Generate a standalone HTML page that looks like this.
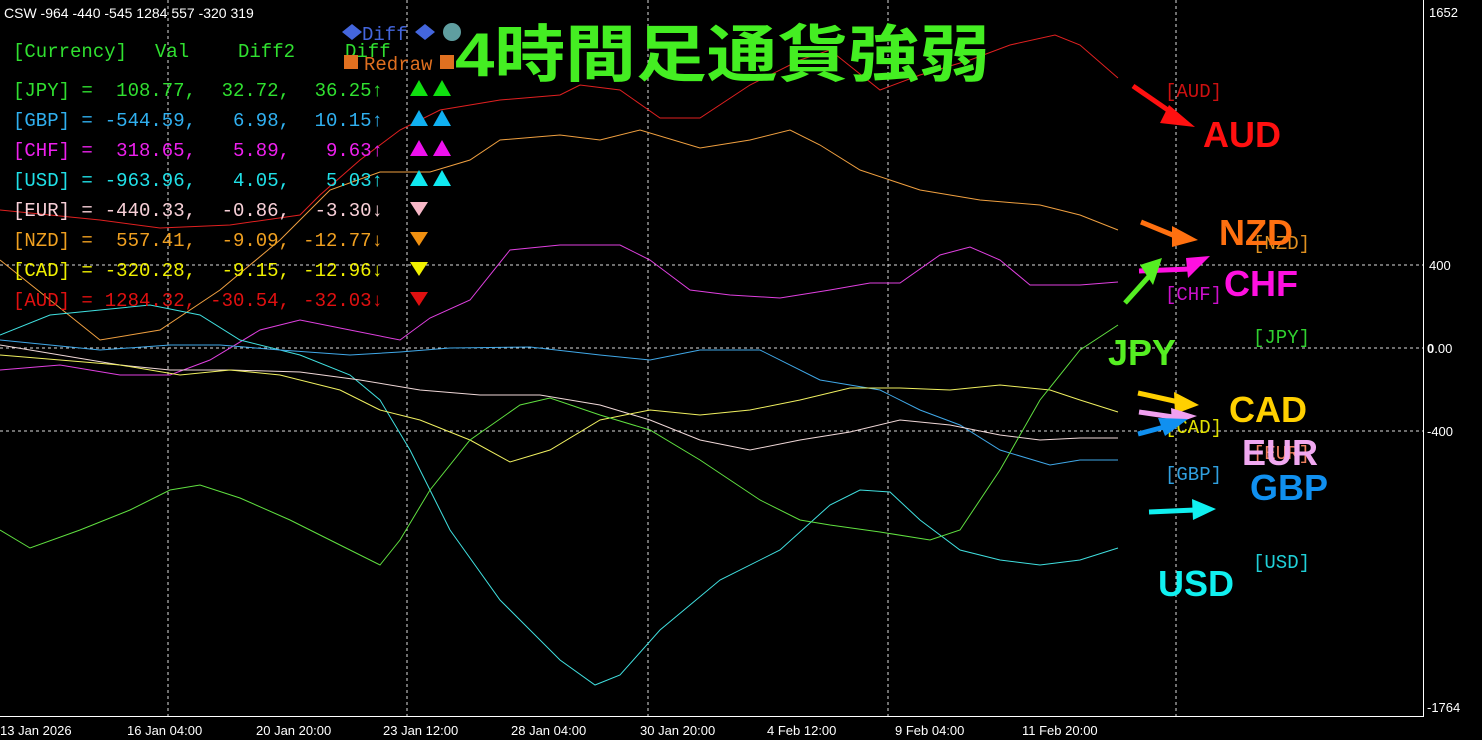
<!DOCTYPE html>
<html><head><meta charset="utf-8"><style>
html,body{margin:0;padding:0;background:#000;width:1482px;height:740px;overflow:hidden}
svg{display:block}
.t{font-family:"Liberation Mono","Noto Sans CJK JP",monospace;font-size:19px}
.ax{font-family:"Liberation Sans",sans-serif;font-size:13px;fill:#fff}
.b{font-family:"Liberation Sans","Noto Sans CJK JP",sans-serif;font-weight:bold}
</style></head><body>
<svg width="1482" height="740" viewBox="0 0 1482 740" xmlns="http://www.w3.org/2000/svg">
<rect width="1482" height="740" fill="#000"/>
<g stroke="#ddd" stroke-width="1" stroke-dasharray="3,3" fill="none">
<line x1="168" y1="0" x2="168" y2="716"/><line x1="407" y1="0" x2="407" y2="716"/>
<line x1="648" y1="0" x2="648" y2="716"/><line x1="888" y1="0" x2="888" y2="716"/>
<line x1="1176" y1="0" x2="1176" y2="716"/>
<line x1="0" y1="265" x2="1423" y2="265"/><line x1="0" y1="348" x2="1423" y2="348"/><line x1="0" y1="431" x2="1423" y2="431"/>
</g>
<g stroke="#fff" stroke-width="1"><line x1="1423.5" y1="0" x2="1423.5" y2="717"/><line x1="0" y1="716.5" x2="1424" y2="716.5"/></g>
<g fill="none" stroke-width="1">
<polyline stroke="#e02020" points="0,210 100,220 160,228 230,225 300,215 320,195 360,160 400,130 440,110 500,100 560,95 580,85 620,90 660,118 700,118 750,85 800,60 830,50 880,90 920,75 970,60 1010,45 1055,35 1080,45 1118,78"/>
<polyline stroke="#f0a040" points="0,260 100,340 160,330 220,290 280,240 330,190 380,172 430,172 470,160 500,140 560,135 600,140 640,130 700,148 750,140 790,130 820,145 860,170 920,190 980,200 1040,205 1080,215 1118,230"/>
<polyline stroke="#e040e0" points="0,370 60,365 120,375 170,375 210,360 260,330 300,320 350,330 400,340 430,318 470,300 510,250 560,245 620,245 650,260 690,290 730,295 780,298 830,290 870,283 900,283 940,255 970,247 1000,260 1030,285 1080,285 1118,282"/>
<polyline stroke="#40e0e0" points="0,335 50,315 100,310 150,305 200,315 240,340 300,355 350,375 380,400 410,450 450,530 500,600 560,660 595,685 620,675 660,630 720,580 780,550 830,505 860,490 890,492 920,520 960,550 1000,560 1040,565 1080,560 1118,548"/>
<polyline stroke="#40a8e8" points="0,340 50,345 100,350 170,345 220,345 280,350 350,355 400,352 450,348 530,347 600,355 650,360 700,350 760,350 820,380 880,390 920,410 960,425 1000,450 1050,465 1080,460 1118,460"/>
<polyline stroke="#f0d8d8" points="0,345 60,355 120,365 170,370 230,370 300,372 360,380 420,390 480,395 540,395 600,405 650,420 700,440 750,450 800,440 850,432 900,420 950,425 1000,435 1040,440 1080,438 1118,438"/>
<polyline stroke="#f0f060" points="0,355 60,360 120,365 180,375 230,370 280,375 340,390 380,410 420,420 470,440 510,462 550,450 600,420 650,410 700,415 750,410 800,400 850,388 900,388 950,390 1000,385 1050,390 1080,400 1118,412"/>
<polyline stroke="#60e040" points="0,530 30,548 80,530 130,510 170,490 200,485 240,498 290,520 340,545 380,565 400,540 430,490 470,440 520,405 550,398 600,415 650,430 700,460 760,500 800,520 830,525 880,532 930,540 960,530 1000,470 1040,400 1080,350 1118,325"/>
</g>
<g class="ax">
<text x="1429" y="17">1652</text><text x="1429" y="270">400</text>
<text x="1427" y="353"><tspan font-weight="bold">0</tspan>.00</text><text x="1427" y="436">-400</text>
<text x="1427" y="712">-1764</text>
<text x="0" y="735">13 Jan 2026</text><text x="127" y="735">16 Jan 04:00</text><text x="256" y="735">20 Jan 20:00</text>
<text x="383" y="735">23 Jan 12:00</text><text x="511" y="735">28 Jan 04:00</text><text x="640" y="735">30 Jan 20:00</text>
<text x="767" y="735">4 Feb 12:00</text><text x="895" y="735">9 Feb 04:00</text><text x="1022" y="735">11 Feb 20:00</text>
</g>
<text x="4" y="18" font-family="Liberation Sans,sans-serif" font-size="14" fill="#fff">CSW -964 -440 -545 1284 557 -320 319</text>
<g class="t" font-size="21">
<text x="13" y="57" fill="#30e030">[Currency]</text><text x="155" y="57" fill="#30e030">Val</text>
<text x="238" y="57" fill="#30e030">Diff2</text><text x="345" y="57" fill="#30e030">Diff</text>
<text x="362" y="40" fill="#4466dd">Diff</text>
<text x="364" y="70" fill="#e07020">Redraw</text>
</g>
<polygon points="352,24 342,32 352,40 362,32" fill="#4466dd"/>
<polygon points="425,24 415,32 425,40 435,32" fill="#4466dd"/>
<circle cx="452" cy="32" r="9" fill="#5f9ea0"/>
<rect x="344" y="55" width="14" height="14" fill="#e07020"/><rect x="440" y="55" width="14" height="14" fill="#e07020"/>
<g class="t" font-size="21">
<g fill="#30e030"><text x="13" y="96">[JPY] =</text><text x="196" y="96" text-anchor="end">108.77,</text><text x="290" y="96" text-anchor="end">32.72,</text><text x="383" y="96" text-anchor="end">36.25↑</text></g>
<g fill="#30b0f0"><text x="13" y="126">[GBP] =</text><text x="196" y="126" text-anchor="end">-544.59,</text><text x="290" y="126" text-anchor="end">6.98,</text><text x="383" y="126" text-anchor="end">10.15↑</text></g>
<g fill="#ee20ee"><text x="13" y="156">[CHF] =</text><text x="196" y="156" text-anchor="end">318.65,</text><text x="290" y="156" text-anchor="end">5.89,</text><text x="383" y="156" text-anchor="end">9.63↑</text></g>
<g fill="#20e0e8"><text x="13" y="186">[USD] =</text><text x="196" y="186" text-anchor="end">-963.96,</text><text x="290" y="186" text-anchor="end">4.05,</text><text x="383" y="186" text-anchor="end">5.03↑</text></g>
<g fill="#f8d0d8"><text x="13" y="216">[EUR] =</text><text x="196" y="216" text-anchor="end">-440.33,</text><text x="290" y="216" text-anchor="end">-0.86,</text><text x="383" y="216" text-anchor="end">-3.30↓</text></g>
<g fill="#f0a020"><text x="13" y="246">[NZD] =</text><text x="196" y="246" text-anchor="end">557.41,</text><text x="290" y="246" text-anchor="end">-9.09,</text><text x="383" y="246" text-anchor="end">-12.77↓</text></g>
<g fill="#f0f000"><text x="13" y="276">[CAD] =</text><text x="196" y="276" text-anchor="end">-320.28,</text><text x="290" y="276" text-anchor="end">-9.15,</text><text x="383" y="276" text-anchor="end">-12.96↓</text></g>
<g fill="#e01010"><text x="13" y="306">[AUD] =</text><text x="196" y="306" text-anchor="end">1284.32,</text><text x="290" y="306" text-anchor="end">-30.54,</text><text x="383" y="306" text-anchor="end">-32.03↓</text></g>
</g>
<g>
<polygon points="410,96 419,80 428,96" fill="#10e010"/><polygon points="433,96 442,80 451,96" fill="#10e010"/>
<polygon points="410,126 419,110 428,126" fill="#10b0f0"/><polygon points="433,126 442,110 451,126" fill="#10b0f0"/>
<polygon points="410,156 419,140 428,156" fill="#ee10ee"/><polygon points="433,156 442,140 451,156" fill="#ee10ee"/>
<polygon points="410,186 419,170 428,186" fill="#10e8f0"/><polygon points="433,186 442,170 451,186" fill="#10e8f0"/>
<polygon points="410,202 428,202 419,216" fill="#f8b8c8"/>
<polygon points="410,232 428,232 419,246" fill="#f09010"/>
<polygon points="410,262 428,262 419,276" fill="#f0f000"/>
<polygon points="410,292 428,292 419,306" fill="#e01010"/>
</g>
<text x="455" y="76" class="b" font-size="62" fill="#44ee22" textLength="535" lengthAdjust="spacingAndGlyphs">4時間足通貨強弱</text>
<g class="t" font-size="19">
<text x="1165" y="97" fill="#cc1010">[AUD]</text>
<text x="1253" y="249" fill="#e09020">[NZD]</text>
<text x="1165" y="300" fill="#cc10cc">[CHF]</text>
<text x="1253" y="343" fill="#30d030">[JPY]</text>
<text x="1165" y="433" fill="#e0e000">[CAD]</text>
<text x="1253" y="459" fill="#f08060">[EUR]</text>
<text x="1165" y="480" fill="#30a0e0">[GBP]</text>
<text x="1253" y="568" fill="#20d0d8">[USD]</text>
</g>
<g stroke-width="5" fill="none">
<line x1="1133" y1="86" x2="1178" y2="117" stroke="#ff1010"/>
<line x1="1141" y1="222" x2="1180" y2="238" stroke="#ff7010"/>
<line x1="1139" y1="271" x2="1190" y2="269" stroke="#ff10e0"/>
<line x1="1125" y1="303" x2="1152" y2="273" stroke="#55ee22"/>
<line x1="1138" y1="393" x2="1183" y2="403" stroke="#ffd000"/>
<line x1="1139" y1="412" x2="1180" y2="418" stroke="#f0a0f0"/>
<line x1="1138" y1="434" x2="1168" y2="426" stroke="#1090f0"/>
<line x1="1149" y1="512" x2="1195" y2="510" stroke="#10f0f0"/>
</g>
<g>
<polygon points="1169,105 1195,127 1160,123" fill="#ff1010"/>
<polygon points="1172,226 1198,240 1172,247" fill="#ff7010"/>
<polygon points="1186,258 1210,256 1188,278" fill="#ff10e0"/>
<polygon points="1140,265 1162,258 1153,285" fill="#55ee22"/>
<polygon points="1174,392 1199,405 1175,414" fill="#ffd000"/>
<polygon points="1171,408 1197,416 1172,425" fill="#f0a0f0"/>
<polygon points="1158,418 1188,419 1165,436" fill="#1090f0"/>
<polygon points="1192,499 1216,509 1193,520" fill="#10f0f0"/>
</g>
<g class="b" font-size="36">
<text x="1203" y="147" fill="#ff1010">AUD</text>
<text x="1219" y="245" fill="#ff7010">NZD</text>
<text x="1224" y="296" fill="#ff10e0">CHF</text>
<text x="1108" y="365" fill="#55ee22">JPY</text>
<text x="1229" y="422" fill="#ffd000">CAD</text>
<text x="1242" y="465" fill="#f0a8f0">EUR</text>
<text x="1250" y="500" fill="#1090f0">GBP</text>
<text x="1158" y="596" fill="#10f0f0">USD</text>
</g>
</svg>
</body></html>
